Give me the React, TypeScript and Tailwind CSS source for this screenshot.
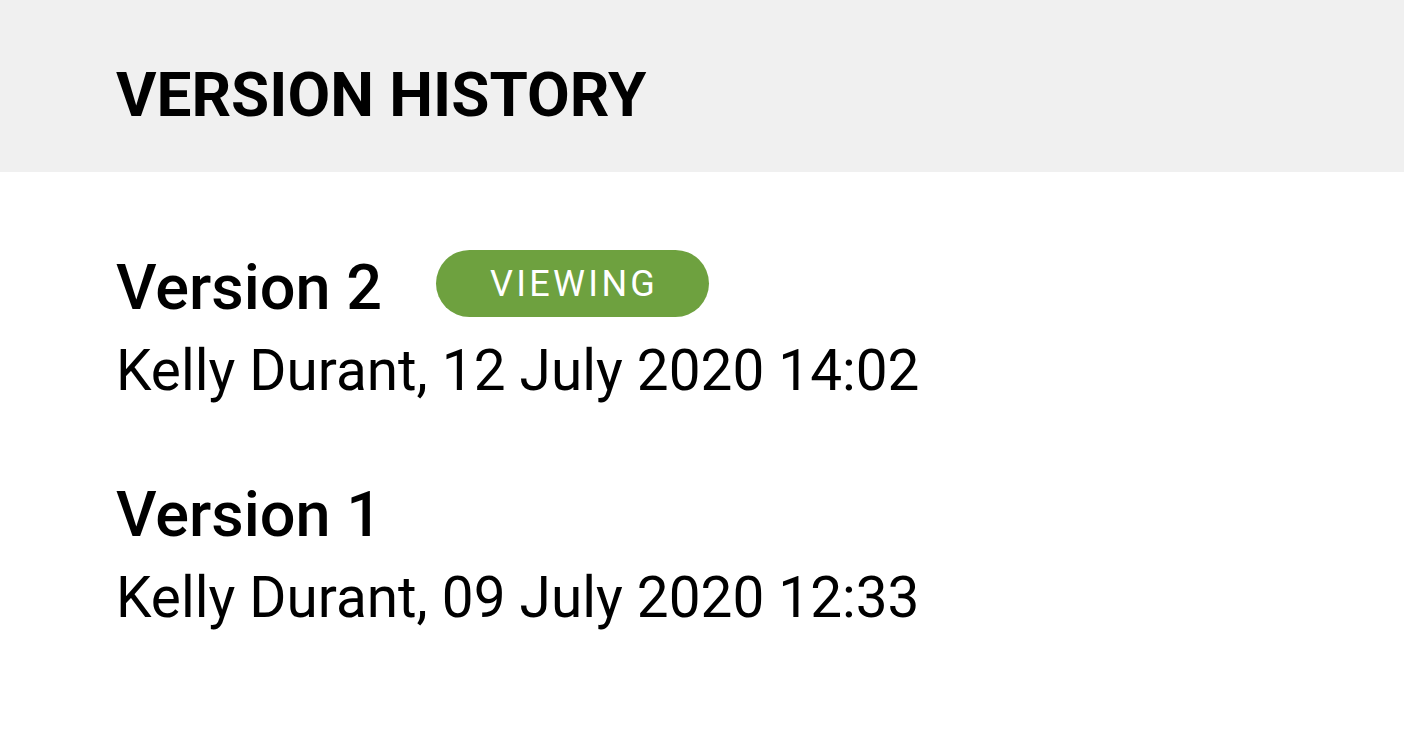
// Version history panel

const versions = [
  { name: "Version 2", author: "Kelly Durant", date: "12 July 2020 14:02", viewing: true },
  { name: "Version 1", author: "Kelly Durant", date: "09 July 2020 12:33", viewing: false },
]

export default function App() {
  return (
    <div className="w-[1404px] h-[749px] bg-white text-black" style={{ fontFamily: "Roboto, sans-serif" }}>
      <div className="h-[172px] bg-[#f0f0f0] pl-[116px] pt-[58px]">
        <h1 className="text-[62px] leading-[74px] font-bold">VERSION HISTORY</h1>
      </div>

      <div className="pl-[116px] pt-[76px] flex flex-col gap-[61px]">
        {versions.map((v) => (
          <div key={v.name} className="flex flex-col">
            <div className="flex items-start gap-[54px] h-[80px]">
              <span className="text-[63px] leading-[80px] font-medium">{v.name}</span>
              {v.viewing && (
                <span className="mt-[2px] h-[67px] w-[273px] pl-[3px] rounded-full bg-[#6ea13f] text-white text-[36px] tracking-[3.3px] flex items-center justify-center">
                  VIEWING
                </span>
              )}
            </div>
            <div className="text-[56.7px] leading-[86px]">
              {v.author}, {v.date}
            </div>
          </div>
        ))}
      </div>
    </div>
  )
}
